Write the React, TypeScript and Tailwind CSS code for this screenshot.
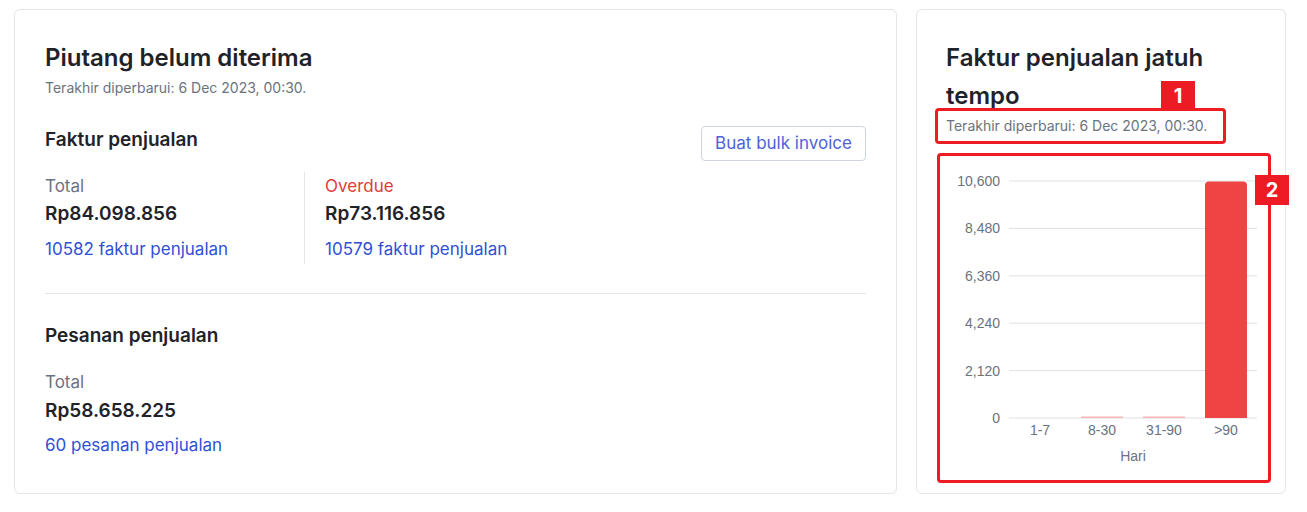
import React from 'react';

const gridColor = '#dde1e7';
const yTicks = ['0', '2,120', '4,240', '6,360', '8,480', '10,600'];

const bars = [
  { label: '1-7', value: 0 },
  { label: '8-30', value: 2 },
  { label: '31-90', value: 1 },
  { label: '>90', value: 10579 },
];

const DueChart: React.FC = () => {
  const base = 263;
  const top = 26;
  const max = 10600;
  const plotH = base - top;
  return (
    <svg width={316} height={320} className="block" style={{ fontFamily: '"Liberation Sans", Arial, sans-serif' }}>
      {yTicks.map((t, i) => {
        const y = base - (plotH / 5) * i;
        return (
          <g key={t}>
            <line x1={63} x2={311} y1={y} y2={y} stroke={gridColor} strokeWidth={1} />
            <text x={54} y={y + 5} textAnchor="end" fontSize={14} fill="#6b7280">
              {t}
            </text>
          </g>
        );
      })}
      {bars.map((b, i) => {
        const cx = 94 + i * 62;
        const h = (b.value / max) * plotH;
        return (
          <g key={b.label}>
            {b.value > 100 ? (
              <path
                d={`M${cx - 21} ${base} V${base - h + 4} Q${cx - 21} ${base - h} ${cx - 17} ${base - h} H${cx + 17} Q${cx + 21} ${base - h} ${cx + 21} ${base - h + 4} V${base} Z`}
                fill="#ef4444"
              />
            ) : b.value > 0 ? (
              <rect x={cx - 21} y={base - 1.5} width={42} height={1.5} fill="#f8b4b4" />
            ) : null}
            <text x={cx} y={base + 17} textAnchor="middle" fontSize={14} fill="#6b7280">
              {b.label}
            </text>
          </g>
        );
      })}
      <text x={187} y={306} textAnchor="middle" fontSize={14} fill="#6b7280">
        Hari
      </text>
    </svg>
  );
};

const Stat: React.FC<{ label: string; value: string; link: string; red?: boolean }> = ({ label, value, link, red }) => (
  <div>
    <div className={`mt-[2px] text-[17px] leading-6 ${red ? 'text-[#e03b3b]' : 'text-[#6b7280]'}`}>{label}</div>
    <div className="mt-[3px] text-[19px] leading-[26px] font-semibold text-[#1f2329]">{value}</div>
    <a className="mt-[10px] block text-[17px] leading-6 text-[#2f4fd6]">{link}</a>
  </div>
);

export default function App() {
  return (
    <div
      className="flex gap-[19px] pl-[14px] pt-[9px] bg-white min-h-[512px]"
      style={{ fontFamily: 'Inter, "Noto Sans", sans-serif' }}
    >
      <div className="w-[883px] h-[485px] rounded-md border border-[#e3e5e8] px-[30px] pt-[29px]">
        <h2 className="text-[24px] leading-[38px] font-semibold text-[#1f2329]">Piutang belum diterima</h2>
        <p className="mt-[2px] text-[14px] leading-[18px] text-[#6b7280]">Terakhir diperbarui: 6 Dec 2023, 00:30.</p>

        <div className="mt-[29px] flex items-start justify-between">
          <h3 className="pt-[2px] text-[19px] leading-6 font-semibold text-[#1f2329]">Faktur penjualan</h3>
          <button className="h-[35px] w-[165px] rounded border border-[#cfd5e0] text-[17px] text-[#4d63d8]">
            Buat bulk invoice
          </button>
        </div>

        <div className="mt-[11px] flex">
          <div className="w-[260px] border-r border-[#e3e5e8] pb-[3px]">
            <Stat label="Total" value="Rp84.098.856" link="10582 faktur penjualan" />
          </div>
          <div className="pl-5">
            <Stat label="Overdue" value="Rp73.116.856" link="10579 faktur penjualan" red />
          </div>
        </div>

        <div className="mt-[29px] h-px bg-[#e3e5e8]" />

        <h3 className="mt-[30px] text-[19px] leading-6 font-semibold text-[#1f2329]">Pesanan penjualan</h3>
        <div className="mt-[22px] text-[17px] leading-6 text-[#6b7280]">Total</div>
        <div className="mt-[4px] text-[19px] leading-[26px] font-semibold text-[#1f2329]">Rp58.658.225</div>
        <a className="mt-[9px] block text-[17px] leading-6 text-[#2f4fd6]">60 pesanan penjualan</a>
      </div>

      <div className="relative w-[370px] h-[485px] rounded-md border border-[#e3e5e8] px-[29px] pt-[29px]">
        <h2 className="text-[24px] leading-[38px] font-semibold text-[#1f2329]">Faktur penjualan jatuh tempo</h2>
        <p className="mt-[2px] text-[14px] leading-[18px] text-[#6b7280]">Terakhir diperbarui: 6 Dec 2023, 00:30.</p>
        <div className="mt-[20px]">
          <DueChart />
        </div>

        <div className="absolute left-[18px] top-[98px] w-[291px] h-[36px] border-[3px] border-[#ed1c24] rounded-sm" />
        <div className="absolute left-[244px] top-[71px] w-[34px] h-[30px] bg-[#ed1c24] flex items-center justify-center text-white text-[20px] font-bold">
          1
        </div>
        <div className="absolute left-[20px] top-[143px] w-[334px] h-[330px] border-[3px] border-[#ed1c24] rounded-sm" />
        <div className="absolute left-[338px] top-[165px] w-[34px] h-[30px] bg-[#ed1c24] flex items-center justify-center text-white text-[20px] font-bold">
          2
        </div>
      </div>
    </div>
  );
}
